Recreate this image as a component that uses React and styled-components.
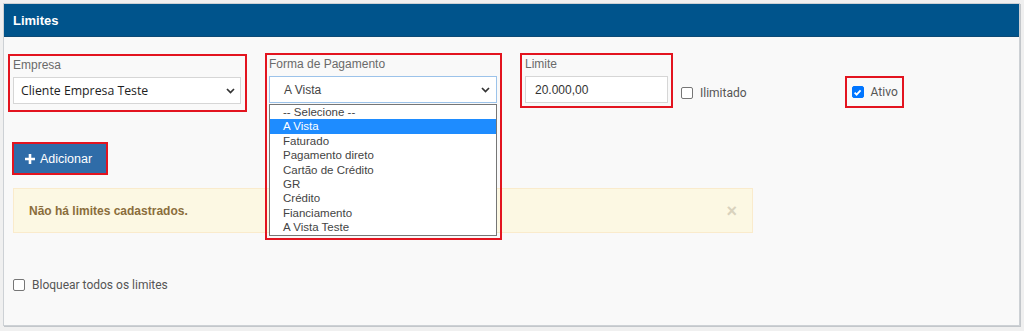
import React from "react";
import styled, { createGlobalStyle } from "styled-components";

const GlobalStyle = createGlobalStyle`
  html, body {
    margin: 0;
    padding: 0;
    background: #f0f0f0;
  }
  body {
    font-family: "Liberation Sans", Arial, sans-serif;
  }
`;

const formas = [
  "-- Selecione --",
  "A Vista",
  "Faturado",
  "Pagamento direto",
  "Cartão de Crédito",
  "GR",
  "Crédito",
  "Fianciamento",
  "A Vista Teste",
];

export default function App() {
  return (
    <>
      <GlobalStyle />
      <Panel>
        <Header>Limites</Header>
        <Body>
          <FieldRow>
            <Marked $width={239} $top={1} $pad="1px 4px 6px 3px">
              <Label>Empresa</Label>
              <Select $width={228}>
                <SelectText $big>Cliente Empresa Teste</SelectText>
                <Chevron />
              </Select>
            </Marked>

            <Marked $width={237} $gap={18} $pad="1px 3px 2px 2px" $raised>
              <Label>Forma de Pagamento</Label>
              <Select $width={228} $focused>
                <SelectText>A Vista</SelectText>
                <Chevron />
              </Select>
              <ListBox>
                {formas.map((f, i) => (
                  <Option key={f} $selected={i === 1}>
                    {f}
                  </Option>
                ))}
              </ListBox>
            </Marked>

            <Marked $width={153} $gap={18} $pad="1px 3px 3px 3px">
              <Label>Limite</Label>
              <Input defaultValue="20.000,00" />
            </Marked>

            <CheckLabel $gap={8} $top={33}>
              <Box />
              Ilimitado
            </CheckLabel>

            <Marked $gap={98} $top={23} $pad="7px 4px 7px 5px">
              <CheckLabel>
                <Box $checked>
                  <svg width="9" height="9" viewBox="0 0 10 10">
                    <polyline
                      points="1.8,5.2 4,7.4 8.4,2.6"
                      fill="none"
                      stroke="#fff"
                      strokeWidth="2"
                    />
                  </svg>
                </Box>
                Ativo
              </CheckLabel>
            </Marked>
          </FieldRow>

          <ButtonFrame>
            <AddButton>
              <svg width="10" height="10" viewBox="0 0 10 10">
                <path d="M3.7 0h2.6v3.7H10v2.6H6.3V10H3.7V6.3H0V3.7h3.7z" fill="#fff" />
              </svg>
              Adicionar
            </AddButton>
          </ButtonFrame>

          <Alert>
            <strong>Não há limites cadastrados.</strong>
            <Close>×</Close>
          </Alert>

          <CheckLabel $block>
            <Box />
            Bloquear todos os limites
          </CheckLabel>
        </Body>
      </Panel>
    </>
  );
}

function Chevron() {
  return (
    <ChevronIcon width="9" height="6" viewBox="0 0 9 6">
      <polyline points="1,1 4.5,4.5 8,1" fill="none" stroke="#333" strokeWidth="1.7" />
    </ChevronIcon>
  );
}

const Panel = styled.div`
  margin: 3px 4px 5px 3px;
  height: 321px;
  border: 1px solid #cdd1d5;
  box-shadow: 1px 1px 0 #c3c7cb;
  background: #f9f9f9;
  box-sizing: content-box;
  display: flex;
  flex-direction: column;
`;

const Header = styled.div`
  height: 33px;
  background: #00548c;
  border-bottom: 1px solid #0d4a75;
  box-sizing: border-box;
  display: flex;
  align-items: center;
  padding-left: 9px;
  color: #fff;
  font-weight: bold;
  font-size: 13px;
`;

const Body = styled.div`
  padding: 16px 0 0 4px;
`;

const FieldRow = styled.div`
  display: flex;
  align-items: flex-start;
  height: 89px;
`;

const Marked = styled.div`
  position: relative;
  z-index: ${(p) => (p.$raised ? 2 : 1)};
  box-sizing: border-box;
  width: ${(p) => (p.$width ? `${p.$width}px` : "auto")};
  margin-left: ${(p) => p.$gap || 0}px;
  margin-top: ${(p) => p.$top || 0}px;
  padding: ${(p) => p.$pad};
  border: 2px solid #e3141f;
`;

const Label = styled.div`
  font-family: "Liberation Sans", Arial, sans-serif;
  font-size: 12px;
  line-height: 16px;
  color: #6a6a6a;
  margin-bottom: 4px;
`;

const Select = styled.div`
  box-sizing: border-box;
  width: ${(p) => p.$width}px;
  height: 27px;
  display: flex;
  align-items: center;
  justify-content: space-between;
  padding: 0 ${(p) => (p.$focused ? 6 : 5)}px 0 ${(p) => (p.$focused ? 14 : 7)}px;
  background: #fff;
  border: 1px solid ${(p) => (p.$focused ? "#9cc3ea" : "#d6d6d6")};
`;

const SelectText = styled.span`
  font-family: ${(p) => (p.$big ? '"Open Sans", "Liberation Sans", sans-serif' : '"Liberation Sans", Arial, sans-serif')};
  font-size: ${(p) => (p.$big ? 12.3 : 12)}px;
  color: ${(p) => (p.$big ? "#1e1e1e" : "#444")};
`;

const ChevronIcon = styled.svg`
  flex: none;
`;

const ListBox = styled.div`
  box-sizing: border-box;
  width: 228px;
  margin-top: 1px;
  border: 1px solid #767676;
  background: #fff;
  padding: 0;
`;

const Option = styled.div`
  height: 14.4px;
  line-height: 14.4px;
  padding-left: 13px;
  font-size: 11.5px;
  color: ${(p) => (p.$selected ? "#fff" : "#444")};
  background: ${(p) => (p.$selected ? "#1e8cff" : "transparent")};
`;

const Input = styled.input`
  box-sizing: border-box;
  width: 143px;
  height: 27px;
  border: 1px solid #d6d6d6;
  background: #fff;
  padding: 0 0 0 9px;
  font-family: "Liberation Sans", Arial, sans-serif;
  font-size: 12px;
  color: #333;
  outline: none;
`;

const CheckLabel = styled.label`
  display: flex;
  align-items: center;
  gap: 7px;
  margin-left: ${(p) => p.$gap || 0}px;
  margin-top: ${(p) => p.$top || 0}px;
  font-family: Roboto, "Liberation Sans", Arial, sans-serif;
  font-size: 12px;
  color: #555;
  ${(p) => p.$block && "margin: 45px 0 0 5px;"}
`;

const Box = styled.span`
  box-sizing: border-box;
  width: 12px;
  height: 12px;
  border-radius: 2px;
  display: flex;
  align-items: center;
  justify-content: center;
  border: 1px solid ${(p) => (p.$checked ? "#0075ff" : "#767676")};
  background: ${(p) => (p.$checked ? "#0075ff" : "#fff")};
`;

const ButtonFrame = styled.div`
  display: inline-flex;
  margin-left: 4px;
  border: 2px solid #e3141f;
`;

const AddButton = styled.button`
  width: 92px;
  height: 29px;
  display: flex;
  align-items: center;
  gap: 5px;
  padding: 0 0 0 11px;
  border: none;
  background: #2f6ca8;
  color: #fff;
  font-family: "Liberation Sans", Arial, sans-serif;
  font-size: 12.5px;
`;

const Alert = styled.div`
  box-sizing: border-box;
  width: 740px;
  height: 45px;
  margin: 13px 0 0 5px;
  padding: 0 15px;
  display: flex;
  align-items: center;
  justify-content: space-between;
  background: #fcf8e3;
  border: 1px solid #faebcc;
  color: #8a6d3b;
  font-size: 12px;
  strong {
    font-weight: bold;
  }
`;

const Close = styled.span`
  font-size: 18px;
  font-weight: bold;
  color: #d9d2bd;
  line-height: 1;
`;
